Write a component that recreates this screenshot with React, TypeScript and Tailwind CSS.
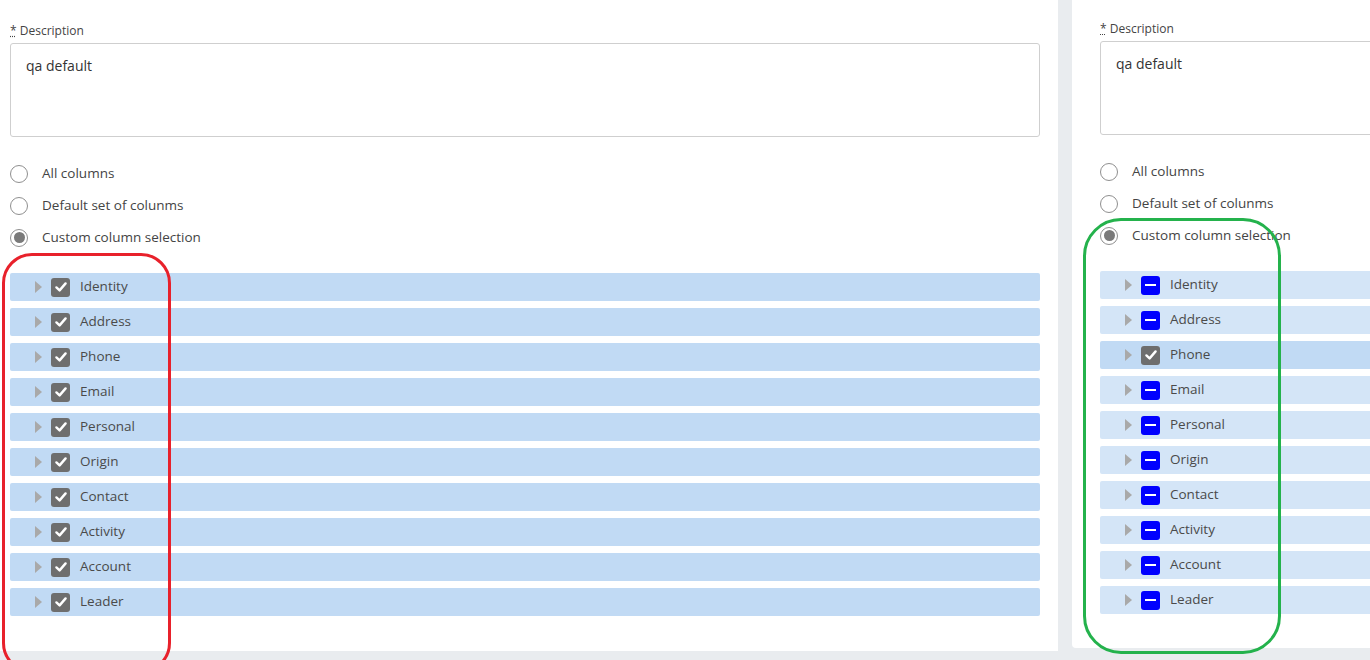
import React from 'react';

type Row = { label: string; state: 'checked' | 'partial' };

const names = ['Identity', 'Address', 'Phone', 'Email', 'Personal', 'Origin', 'Contact', 'Activity', 'Account', 'Leader'];

function Radio({ selected }: { selected?: boolean }) {
  return (
    <span className="flex h-[18px] w-[18px] shrink-0 items-center justify-center rounded-full border border-[#8f8f8f] bg-white">
      {selected && <span className="h-[11px] w-[11px] rounded-full bg-[#7a7a7a]" />}
    </span>
  );
}

function Box({ state }: { state: Row['state'] }) {
  if (state === 'partial') {
    return (
      <span className="flex h-[19px] w-[19px] items-center justify-center rounded-[3px] bg-[#0000ff]">
        <span className="h-[2px] w-[11px] bg-white" />
      </span>
    );
  }
  return (
    <span className="flex h-[19px] w-[19px] items-center justify-center rounded-[3px] bg-[#6e6e6e]">
      <svg width="14" height="14" viewBox="0 0 14 14">
        <path d="M2.4 7.4 L5.6 10.4 L11.6 3.4" fill="none" stroke="white" strokeWidth="2.4" strokeLinecap="round" strokeLinejoin="round" />
      </svg>
    </span>
  );
}

function Panel({ rows, light, shift }: { rows: Row[]; light?: boolean; shift?: boolean }) {
  return (
    <div className={`flex flex-col ${shift ? 'pt-[21px]' : 'pt-[23px]'}`}>
      <label className="text-[12px] leading-[16px] text-[#444]">
        <span className="underline decoration-dotted">*</span> Description
      </label>
      <div className="mt-[4px] h-[94px] w-[1030px] rounded-[3px] border border-[#cfcfcf] bg-white px-[15px] py-[12px] text-[14px] leading-[20px] text-[#333]">
        qa default
      </div>
      <div className="mt-[27px] flex flex-col gap-[13px] text-[13.5px] text-[#444]">
        <div className="flex h-[19px] items-center gap-[14px]"><Radio />All columns</div>
        <div className="flex h-[19px] items-center gap-[14px]"><Radio />Default set of colunms</div>
        <div className="flex h-[19px] items-center gap-[14px]"><Radio selected />Custom column selection</div>
      </div>
      <div className="mt-[26px] flex flex-col gap-[7px]">
        {rows.map((r) => (
          <div
            key={r.label}
            className={`flex h-[28px] w-[1030px] items-center rounded-[2px] pl-[25px] text-[13.5px] text-[#4a4a4a] ${
              light && r.state === 'partial' ? 'bg-[#d4e5f7]' : 'bg-[#c1daf4]'
            }`}
          >
            <span className="mr-[9px] h-0 w-0 border-y-[6px] border-l-[7px] border-y-transparent border-l-[#a9a9a9]" />
            <Box state={r.state} />
            <span className="ml-[10px] pb-[1px]">{r.label}</span>
          </div>
        ))}
      </div>
    </div>
  );
}

export default function App() {
  const left: Row[] = names.map((n) => ({ label: n, state: 'checked' }));
  const right: Row[] = names.map((n) => ({ label: n, state: n === 'Phone' ? 'checked' : 'partial' }));

  return (
    <div className="relative h-[660px] w-[1370px] overflow-hidden bg-[#e9ecef]" style={{ fontFamily: '"Open Sans", "Noto Sans", sans-serif' }}>
      <div className="flex items-start">
        <div className="h-[651px] w-[1058px] bg-white pl-[10px]">
          <Panel rows={left} />
        </div>
        <div className="ml-[14px] h-[648px] w-[298px] overflow-hidden rounded-bl-[4px] bg-white pl-[28px]">
          <Panel rows={right} light shift />
        </div>
      </div>

      {/* annotations */}
      <div className="absolute left-[2px] top-[253px] h-[420px] w-[169px] rounded-[30px] border-[3px] border-[#e8212b]" />
      <div className="absolute left-[1083px] top-[218px] h-[436px] w-[198px] rounded-[38px] border-[3px] border-[#24b24c]" />
    </div>
  );
}
